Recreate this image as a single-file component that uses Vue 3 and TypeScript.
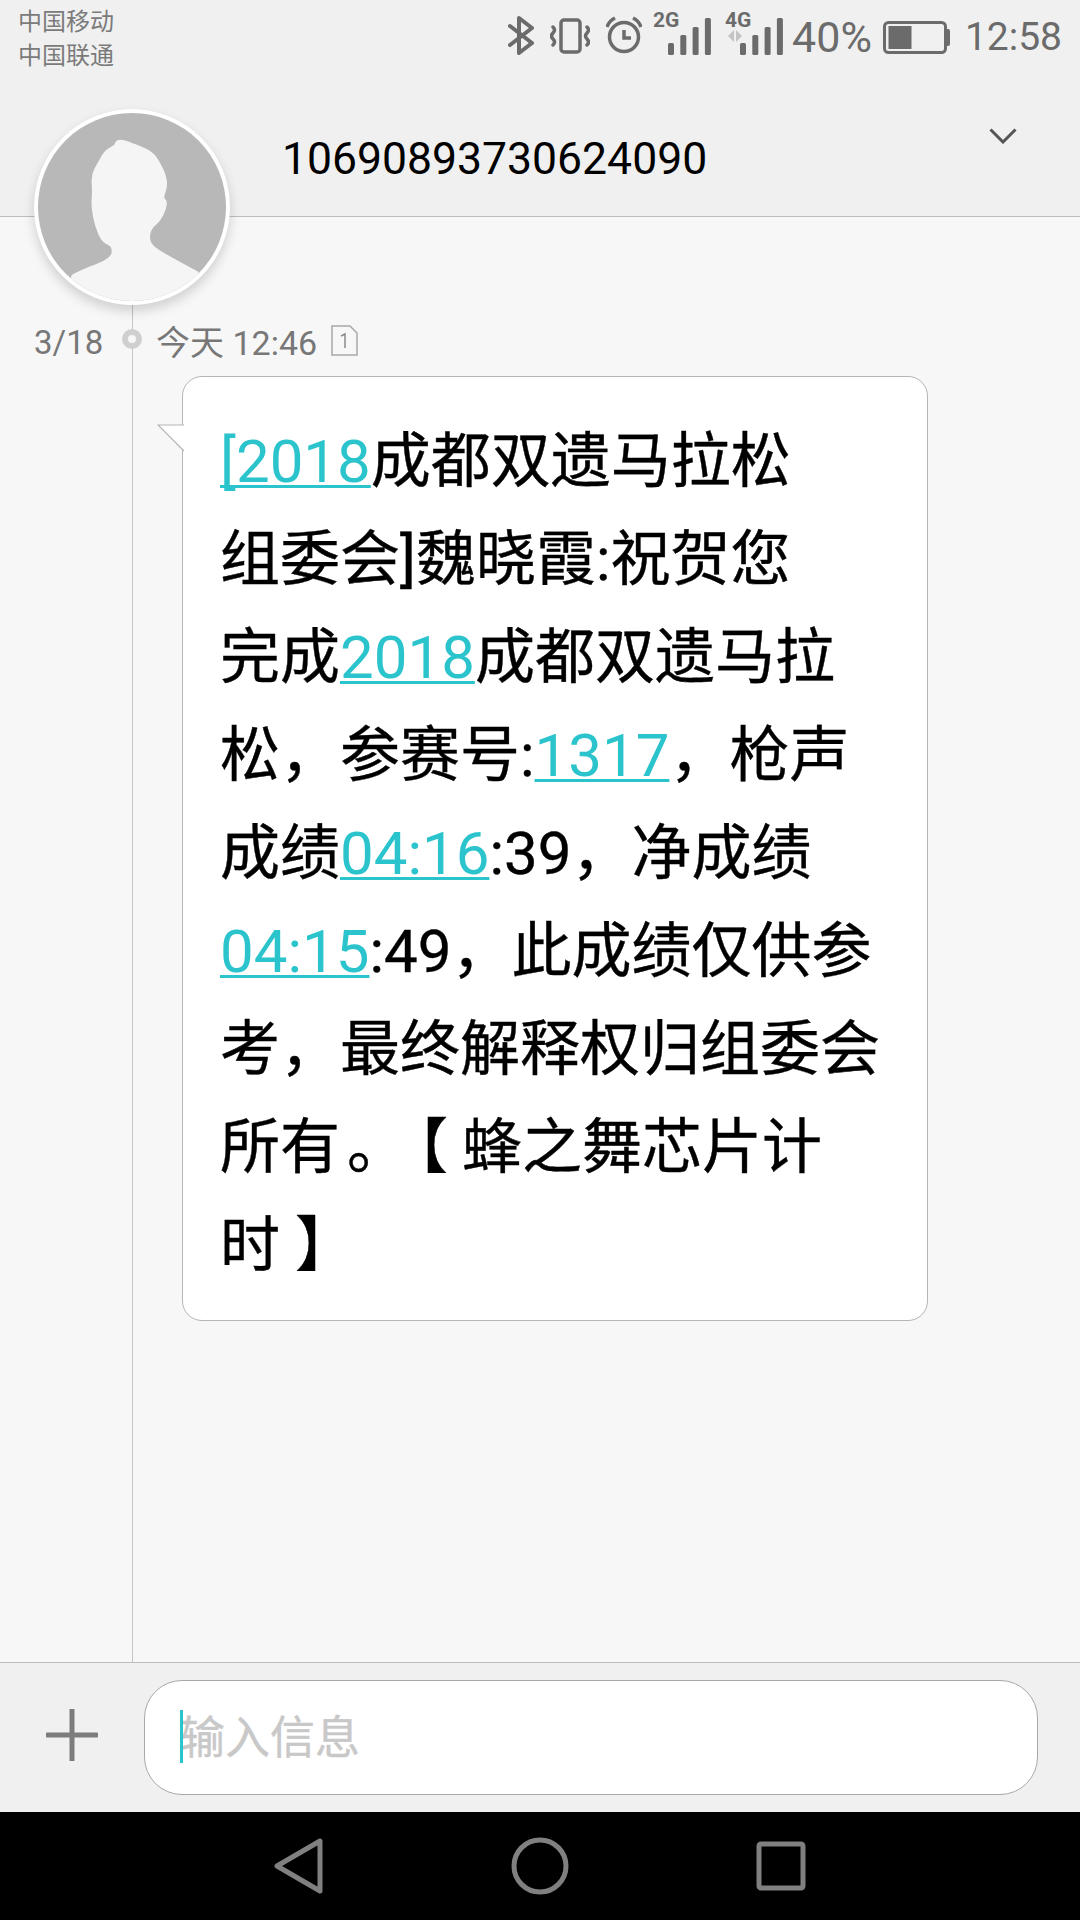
<script setup lang="ts">
interface Segment {
  text: string
  kind?: 'link' | 'stop' | 'open'
}

interface Signal {
  label: string
  arrows: boolean
}

const signals: Signal[] = [
  { label: '2G', arrows: false },
  { label: '4G', arrows: true },
]

const barHeights: number[] = [12, 20, 28, 37]

const lines: Segment[][] = [
  [{ text: '[2018', kind: 'link' }, { text: '成都双遗马拉松' }],
  [{ text: '组委会]魏晓霞:祝贺您' }],
  [{ text: '完成' }, { text: '2018', kind: 'link' }, { text: '成都双遗马拉' }],
  [{ text: '松，参赛号:' }, { text: '1317', kind: 'link' }, { text: '，枪声' }],
  [{ text: '成绩' }, { text: '04:16', kind: 'link' }, { text: ':39，净成绩' }],
  [{ text: '04:15', kind: 'link' }, { text: ':49，此成绩仅供参' }],
  [{ text: '考，最终解释权归组委会' }],
  [{ text: '所有' }, { text: '。', kind: 'stop' }, { text: '【', kind: 'open' }, { text: ' 蜂之舞芯片计' }],
  [{ text: '时 】' }],
]

// traced outline of the default contact head, smoothed through midpoints
const outline: [number, number][] = [
  [71.7, 275], [88.3, 266.7], [103.3, 261.7], [111.7, 255], [111.7, 248.3], [110, 246],
  [101.7, 241.7], [95, 226.7], [91, 206.7], [92.3, 191.7], [91, 175], [98.3, 161.7],
  [105, 150], [115, 145], [115, 141.7], [120, 139], [131.7, 142.7], [151.7, 150.7],
  [160, 161.7], [166.7, 176.7], [167.3, 188], [163.3, 198], [167.3, 200.7], [166, 210],
  [160, 221.7], [151.7, 228.3], [149.3, 238.3], [153.3, 246.7], [173.3, 258.3], [198.3, 271.7],
]

const facePath = outline.reduce((d, [x, y], i) => {
  const next = outline[i + 1]
  if (!next) return `${d} L${x} ${y}`
  return `${d} Q${x} ${y} ${(x + next[0]) / 2} ${(y + next[1]) / 2}`
}, 'M71.7 275') + ' L210 320 L60 320 Z'
</script>

<template>
  <div class="screen">
    <header class="top">
      <div class="status">
        <div class="carriers">
          <div>中国移动</div>
          <div>中国联通</div>
        </div>
        <div class="status-right">
          <svg class="ico bt" width="27" height="60" viewBox="0 0 27 60">
            <path d="M2 26 L24 43 L11 53 V18 L24 28 L2 45" fill="none" stroke="#6b6b6b" stroke-width="4" stroke-linejoin="round" stroke-linecap="round" />
          </svg>
          <svg class="ico vib" width="40" height="60" viewBox="0 0 40 60">
            <rect x="11" y="20" width="19" height="32" rx="3" fill="none" stroke="#6b6b6b" stroke-width="3.5" />
            <path d="M3 27 q3 3 0 6 q-3 3 0 6 q3 3 0 6 M37 27 q3 3 0 6 q-3 3 0 6 q3 3 0 6" fill="none" stroke="#6b6b6b" stroke-width="3.5" stroke-linecap="round" />
          </svg>
          <svg class="ico alarm" width="36" height="60" viewBox="0 0 36 60">
            <circle cx="18" cy="37" r="14.5" fill="none" stroke="#6b6b6b" stroke-width="3.5" />
            <path d="M18 30 V38 H25" fill="none" stroke="#6b6b6b" stroke-width="3.5" />
            <path d="M1 27 Q3 21 9 18 M35 27 Q33 21 27 18" fill="none" stroke="#6b6b6b" stroke-width="3.5" />
          </svg>
          <svg v-for="s in signals" :key="s.label" class="ico sig" width="58" height="60" viewBox="0 0 58 60">
            <text x="0" y="27" class="net">{{ s.label }}</text>
            <path v-if="s.arrows" d="M9 30 V42 L3 36 Z M11 30 L17 36 L11 42 Z" fill="#c4c4c4" />
            <rect
              v-for="(h, i) in barHeights"
              :key="i"
              :x="15 + i * 12.3"
              :y="55 - h"
              width="6"
              :height="h"
              rx="1.5"
              fill="#6b6b6b"
            />
          </svg>
          <span class="status-text pct">40%</span>
          <svg class="ico batt" width="67" height="60" viewBox="0 0 67 60">
            <rect x="1.5" y="22.5" width="61" height="30" rx="4" fill="none" stroke="#6b6b6b" stroke-width="3" />
            <rect x="5.5" y="26" width="23" height="23" fill="#6b6b6b" />
            <path d="M64 29 H65 Q67 29 67 31 V44 Q67 46 65 46 H64 Z" fill="#6b6b6b" />
          </svg>
          <span class="status-text clock">12:58</span>
        </div>
      </div>
      <div class="title-row">
        <span class="number">10690893730624090</span>
        <svg class="chevron" width="28" height="16" viewBox="0 0 28 16">
          <path d="M1.5 1.5 L14 14 L26.5 1.5" fill="none" stroke="#555" stroke-width="3" />
        </svg>
      </div>
    </header>

    <main class="thread">
      <div class="date-row">
        <span class="date">3/18</span>
        <span class="dot"></span>
        <span class="time">今天 12:46</span>
        <svg class="sim" width="27" height="31" viewBox="0 0 27 31">
          <path d="M1 1 H19 L26 8 V30 H1 Z" fill="none" stroke="#a9a9a9" stroke-width="1.5" />
          <path d="M10 11 L14 9 V23" fill="none" stroke="#8a8a8a" stroke-width="1.5" />
        </svg>
      </div>

      <div class="bubble">
        <svg class="tail" width="28" height="28" viewBox="0 0 28 28">
          <path d="M27 1 H1 L27 27" fill="#fff" stroke="#b5b5b5" stroke-width="1.2" />
        </svg>
        <div v-for="(line, i) in lines" :key="i" class="line">
          <template v-for="(seg, j) in line" :key="j">
            <span :class="seg.kind">{{ seg.text }}</span>
          </template>
        </div>
      </div>
    </main>

    <div class="composer">
      <svg class="plus" width="52" height="52" viewBox="0 0 52 52">
        <path d="M26 1 V51 M1 26 H51" stroke="#7c7c7c" stroke-width="5" stroke-linecap="round" />
      </svg>
      <div class="input">
        <span class="cursor"></span>
        <span class="placeholder">输入信息</span>
      </div>
    </div>

    <nav class="navbar">
      <svg width="50" height="56" viewBox="0 0 50 56">
        <path d="M46 3 V53 L3 28 Z" fill="none" stroke="#808080" stroke-width="5" stroke-linejoin="round" />
      </svg>
      <svg width="58" height="58" viewBox="0 0 58 58">
        <circle cx="29" cy="29" r="26" fill="none" stroke="#808080" stroke-width="5" />
      </svg>
      <svg width="50" height="50" viewBox="0 0 50 50">
        <rect x="3" y="3" width="44" height="44" rx="2" fill="none" stroke="#808080" stroke-width="5" />
      </svg>
    </nav>

    <div class="timeline"></div>
    <svg class="avatar" width="196" height="196" viewBox="34 109 196 196">
      <defs>
        <clipPath id="face">
          <circle cx="132" cy="207" r="94" />
        </clipPath>
      </defs>
      <circle cx="132" cy="207" r="98" fill="#fff" />
      <circle cx="132" cy="207" r="94" fill="#b8b8b8" />
      <path clip-path="url(#face)" :d="facePath" fill="#f5f5f5" />
    </svg>
  </div>
</template>

<style>
html,
body {
  margin: 0;
  background: #000;
}
</style>

<style scoped>
.screen {
  position: relative;
  width: 1080px;
  height: 1920px;
  overflow: hidden;
  display: flex;
  flex-direction: column;
  background: #f7f7f7;
  font-family: Roboto, "Noto Sans CJK SC", sans-serif;
  text-spacing-trim: space-all;
}

.top {
  height: 216px;
  flex: none;
  box-sizing: content-box;
  background: #f0f0f0;
  border-bottom: 1px solid #bdbdbd;
}

.status {
  height: 60px;
  display: flex;
  justify-content: space-between;
  padding: 0 18px 0 18px;
}

.carriers {
  padding-top: 5px;
  font-size: 24px;
  line-height: 34px;
  color: #7b7b7b;
}

.status-right {
  display: flex;
  align-items: flex-start;
}

.ico {
  display: block;
  flex: none;
}

.vib {
  margin-left: 15px;
}

.alarm {
  margin-left: 16px;
}

.sig {
  margin-left: 11px;
}

.sig + .sig {
  margin-left: 14px;
}

.net {
  font-family: Roboto, sans-serif;
  font-size: 21px;
  font-weight: 700;
  fill: #6b6b6b;
}

.status-text {
  line-height: 75px;
  height: 60px;
  color: #6b6b6b;
}

.pct {
  margin-left: 9px;
  font-size: 43px;
}

.batt {
  margin-left: 11px;
}

.clock {
  margin-left: 15px;
  font-size: 39px;
}

.title-row {
  position: relative;
  display: flex;
  align-items: flex-start;
  justify-content: space-between;
  padding: 68px 63px 0 282px;
  height: 88px;
}

.number {
  margin-top: 1px;
  font-size: 44.5px;
  line-height: 60px;
  color: #000;
}

.chevron {
  display: block;
  flex: none;
}

.thread {
  flex: 1;
  min-height: 0;
}

.date-row {
  position: relative;
  display: flex;
  align-items: center;
  height: 50px;
  margin-top: 100px;
  padding-left: 34px;
  font-size: 33px;
  color: #777;
}

.date {
  width: 122px;
}

.dot {
  position: absolute;
  z-index: 2;
  left: 122px;
  top: 12px;
  width: 20px;
  height: 20px;
  box-sizing: border-box;
  border: 6px solid #cfcfcf;
  border-radius: 50%;
  background: #f7f7f7;
}

.time {
  margin-top: -4px;
  font-size: 34px;
}

.sim {
  display: block;
  margin: -4px 0 0 14px;
}

.bubble {
  position: relative;
  box-sizing: border-box;
  width: 746px;
  height: 945px;
  margin: 9px 0 0 182px;
  padding: 36px 0 0 37px;
  background: #fff;
  border: 1px solid #b5b5b5;
  border-radius: 20px;
}

.tail {
  position: absolute;
  left: -26px;
  top: 47px;
}

.line {
  font-size: 60px;
  line-height: 98px;
  height: 98px;
  color: #000;
  white-space: pre;
  -webkit-text-stroke: 0.4px #000;
}

.link {
  color: #2cc4cc;
  -webkit-text-stroke: 0;
  text-decoration: underline;
  text-decoration-thickness: 3px;
  text-decoration-skip-ink: none;
  text-underline-offset: 3px;
}

.stop {
  margin-left: 7px;
  letter-spacing: -19px;
}

.open {
  letter-spacing: -1px;
}

.composer {
  flex: none;
  height: 150px;
  box-sizing: border-box;
  display: flex;
  align-items: center;
  padding: 0 42px 0 46px;
  background: #f0f0f0;
  border-top: 1px solid #bdbdbd;
}

.plus {
  display: block;
  flex: none;
  margin-top: -6px;
}

.input {
  position: relative;
  flex: 1;
  height: 115px;
  box-sizing: border-box;
  margin-left: 46px;
  display: flex;
  align-items: center;
  padding-left: 35px;
  background: #fff;
  border: 1px solid #a8a8a8;
  border-radius: 38px;
}

.cursor {
  position: absolute;
  left: 35px;
  top: 29px;
  width: 3px;
  height: 53px;
  background: #2bc4cc;
}

.placeholder {
  margin-top: -7px;
  font-size: 45px;
  color: #c8c8c8;
  -webkit-text-stroke: 0.4px #c8c8c8;
}

.navbar {
  flex: none;
  height: 108px;
  display: flex;
  align-items: center;
  justify-content: center;
  gap: 187px;
  background: #000;
}

.navbar svg {
  display: block;
}

.timeline {
  position: absolute;
  left: 132px;
  top: 300px;
  width: 1px;
  height: 1362px;
  background: #c6c6c6;
}

.avatar {
  position: absolute;
  left: 34px;
  top: 109px;
  border-radius: 50%;
  box-shadow: 0 6px 12px rgba(0, 0, 0, 0.16);
}
</style>
